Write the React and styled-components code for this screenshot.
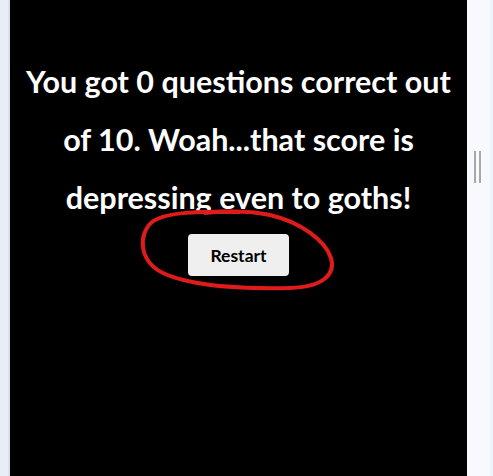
import React from "react";
import styled, { createGlobalStyle } from "styled-components";

const GlobalStyle = createGlobalStyle`
  html, body {
    margin: 0;
    padding: 0;
    height: 100%;
    overflow: hidden;
  }
  #root {
    height: 100%;
  }
`;

const Page = styled.div`
  display: flex;
  height: 476px;
  width: 493px;
  background: #f8f9fd;
`;

const Gutter = styled.div`
  width: 8px;
  background: #e9eef6;
  border-right: 2px solid #dde2ea;
`;

const Panel = styled.main`
  position: relative;
  width: 457px;
  background: #000;
  display: flex;
  flex-direction: column;
  align-items: center;
  padding-top: 52px;
  box-sizing: border-box;
`;

const Result = styled.h1`
  margin: 0;
  color: #fff;
  font-family: Lato, "Noto Sans", sans-serif;
  font-weight: 700;
  font-size: 30.5px;
  line-height: 58px;
  text-align: center;
  white-space: nowrap;
`;

const RestartButton = styled.button`
  margin-top: 8px;
  width: 101px;
  height: 42px;
  border: none;
  border-radius: 4px;
  background: #efefef;
  color: #000;
  font-family: Lato, "Noto Sans", sans-serif;
  font-weight: 700;
  font-size: 17.5px;
  cursor: pointer;
`;

const Scribble = styled.svg`
  position: absolute;
  left: 0;
  top: 0;
  pointer-events: none;
`;

const Side = styled.aside`
  flex: 1;
  display: flex;
  justify-content: flex-start;
  padding-left: 7px;
  padding-top: 151px;
  border-right: 3px solid #eef2fa;
  box-sizing: border-box;
`;

const Grip = styled.div`
  display: flex;
  gap: 3px;
  height: 32px;
`;

const GripBar = styled.span`
  width: 2px;
  height: 100%;
  background: #a8a8a8;
`;

export default function App() {
  return (
    <Page>
      <GlobalStyle />
      <Gutter />
      <Panel>
        <Result>
          You got 0 questions correct out
          <br />
          of 10. Woah...that score is
          <br />
          depressing even to goths!
        </Result>
        <RestartButton>Restart</RestartButton>
        {/* hand-drawn red loop around the button */}
        <Scribble width="457" height="476" viewBox="0 0 457 476">
          <path
            d="M230 212 C 190 211, 155 212, 142 222 C 128 234, 128 262, 155 274 C 185 287, 240 289, 280 288 C 312 287, 326 275, 321 258 C 315 240, 290 222, 260 215 C 240 211, 215 211, 195 213"
            fill="none"
            stroke="#e01b1b"
            strokeWidth="4"
            strokeLinecap="round"
          />
        </Scribble>
      </Panel>
      <Side>
        <Grip>
          <GripBar />
          <GripBar />
        </Grip>
      </Side>
    </Page>
  );
}
